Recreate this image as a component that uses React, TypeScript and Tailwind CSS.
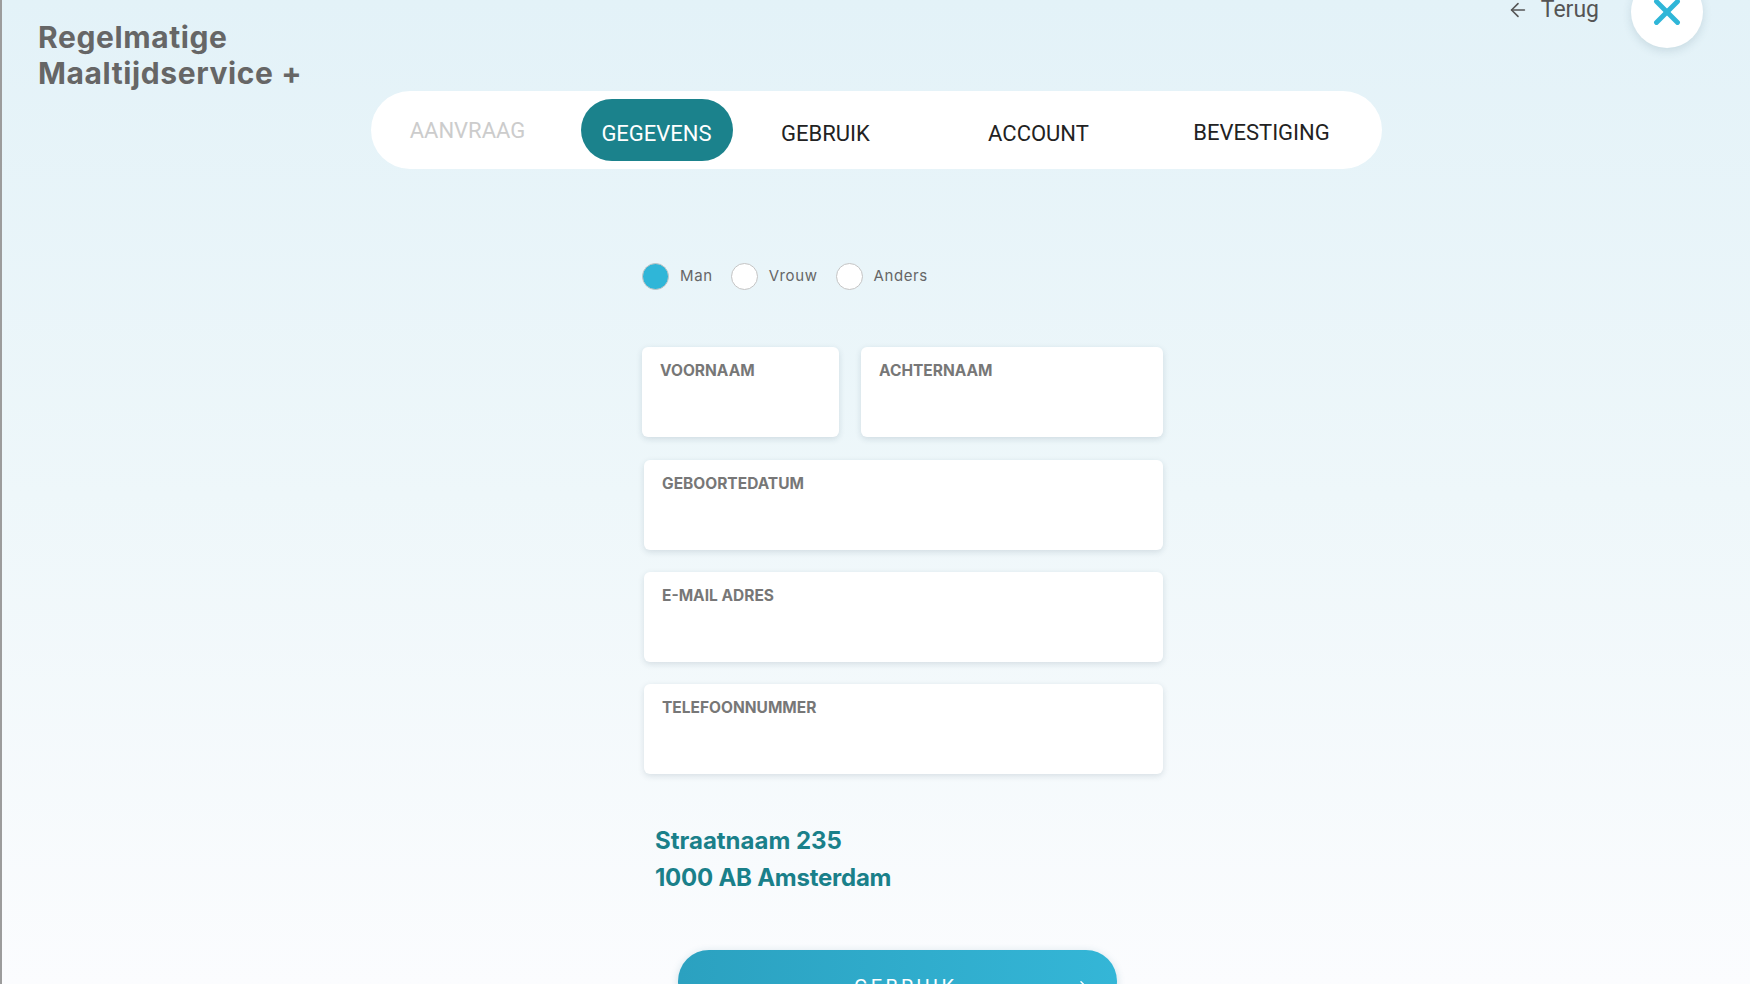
import { ArrowLeft, ArrowRight, X } from "lucide-react";

const FIELDS_FULL = ["GEBOORTEDATUM", "E-MAIL ADRES", "TELEFOONNUMMER"];

function Field({ label, className = "" }: { label: string; className?: string }) {
  return (
    <div
      className={`h-[90px] rounded-[6px] bg-white pl-[18px] pt-[11px] shadow-[0_2px_6px_rgba(30,60,80,0.14)] ${className}`}
    >
      <span className="font-['Inter',sans-serif] text-[15.5px] font-bold leading-[20px] text-[#777777]">
        {label}
      </span>
    </div>
  );
}

function Radio({ label, checked }: { label: string; checked?: boolean }) {
  return (
    <label className="flex items-center gap-[11px]">
      <span
        className={`h-[27px] w-[27px] rounded-full border border-[#c4c4c4] ${
          checked ? "bg-[#2fb6d8]" : "bg-white"
        }`}
      />
      <span className="font-['Inter',sans-serif] text-[15px] tracking-[0.04em] text-[#666666]">
        {label}
      </span>
    </label>
  );
}

export default function App() {
  return (
    <div className="h-[984px] w-full overflow-hidden border-l-2 border-[#9c9c9c] bg-gradient-to-b from-[#e3f2f8] via-[#eef7fa] to-[#fbfcfe]">
      <header className="flex items-start justify-between">
        <h1 className="pl-[36px] pt-[19px] font-['Inter',sans-serif] text-[30px] font-bold leading-[36px] tracking-[0.02em] text-[#666666]">
          Regelmatige
          <br />
          Maaltijdservice +
        </h1>
        <div className="-mt-[24px] flex items-center gap-[32px] pr-[47px]">
          <button className="-mt-[4px] flex items-center gap-[12px] font-['Roboto',sans-serif] text-[23px] text-[#555555]">
            <ArrowLeft className="h-[22px] w-[22px]" strokeWidth={1.75} />
            Terug
          </button>
          <button className="flex h-[72px] w-[72px] items-center justify-center rounded-full bg-white shadow-[0_3px_10px_rgba(40,80,100,0.15)]">
            <X className="h-[42px] w-[42px] text-[#2fb6d8]" strokeWidth={2.8} />
          </button>
        </div>
      </header>

      <nav className="mx-auto flex h-[78px] w-[1011px] items-center rounded-full bg-white pl-[22px] font-['Roboto',sans-serif] text-[22px]">
        <span className="w-[150px] text-center text-[#cccccc]">AANVRAAG</span>
        <span className="ml-[38px] flex h-[62px] w-[152px] items-center justify-center rounded-[31px] bg-[#1b828c] pt-[6px] text-white">
          GEGEVENS
        </span>
        <span className="ml-[18px] mt-[7px] w-[150px] text-center text-[#222222]">GEBRUIK</span>
        <span className="ml-[63px] mt-[7px] w-[150px] text-center text-[#222222]">ACCOUNT</span>
        <span className="ml-[63px] mt-[5px] w-[170px] text-center text-[#222222]">BEVESTIGING</span>
      </nav>

      <main className="ml-[640px] w-[521px]">
        <div className="mt-[94px] flex items-center gap-[18px]">
          <Radio label="Man" checked />
          <Radio label="Vrouw" />
          <Radio label="Anders" />
        </div>

        <div className="mt-[57px] flex gap-[22px]">
          <Field label="VOORNAAM" className="w-[197px]" />
          <Field label="ACHTERNAAM" className="flex-1" />
        </div>
        <div className="mt-[23px] flex flex-col gap-[22px] pl-[2px]">
          {FIELDS_FULL.map((f) => (
            <Field key={f} label={f} />
          ))}
        </div>

        <div className="mt-[48px] pl-[13px] font-['Inter',sans-serif] text-[24px] font-bold leading-[37px] text-[#1a808a]">
          <p>Straatnaam 235</p>
          <p className="tracking-[-0.01em]">1000 AB Amsterdam</p>
        </div>

        <button className="ml-[36px] mt-[54px] flex h-[62px] w-[439px] items-center rounded-[36px] bg-gradient-to-r from-[#2ba1c0] to-[#34b6d7] pl-[176px] pr-[27px] pt-[12px] shadow-[0_2px_8px_rgba(30,100,130,0.2)]">
          <span className="font-['Roboto',sans-serif] text-[20px] tracking-[0.16em] text-white">GEBRUIK</span>
          <ArrowRight className="ml-auto h-[18px] w-[18px] text-white" strokeWidth={2} />
        </button>
      </main>
    </div>
  );
}
